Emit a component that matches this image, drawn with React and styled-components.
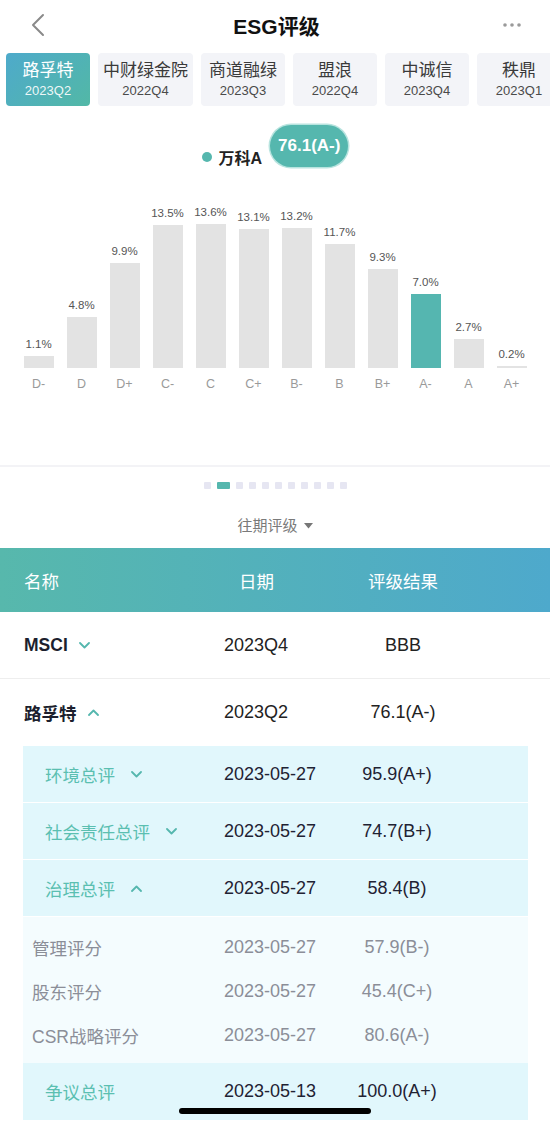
import React from "react";
import styled, { createGlobalStyle } from "styled-components";

const TEAL = "#55b7ae";

const GlobalStyle = createGlobalStyle`
  body {
    margin: 0;
    background: #fff;
    font-family: "Liberation Sans", "Noto Sans CJK SC", sans-serif;
  }
`;

const Page = styled.div`
  width: 550px;
  min-height: 1125px;
  overflow: hidden;
  background: #fff;
`;

const NavBar = styled.div`
  height: 50px;
  display: grid;
  grid-template-columns: 1fr auto 1fr;
  align-items: center;
  padding: 0 28px 0 31px;
`;

const NavTitle = styled.h1`
  margin: 0;
  font-size: 21px;
  font-weight: bold;
  color: #111;
`;

const NavRight = styled.div`
  justify-self: end;
  display: flex;
`;

const TabStrip = styled.div`
  display: flex;
  gap: 8px;
  padding: 0 6px;
  margin-top: 3px;
  overflow: hidden;
`;

const Tab = styled.div`
  flex: 0 0 auto;
  min-width: 84px;
  height: 53px;
  padding: 0 5px;
  box-sizing: border-box;
  border-radius: 4px;
  display: flex;
  flex-direction: column;
  align-items: center;
  justify-content: center;
  gap: 2px;
  background: ${(p) =>
    p.$active ? "linear-gradient(135deg, #4eaacb 0%, #52b8a6 100%)" : "#f3f4f8"};
`;

const TabName = styled.span`
  font-size: 17px;
  line-height: 20px;
  color: ${(p) => (p.$active ? "#fff" : "#3a3a3a")};
`;

const TabYear = styled.span`
  font-size: 13px;
  line-height: 16px;
  color: ${(p) => (p.$active ? "rgba(255,255,255,0.92)" : "#4a4a4a")};
`;

const Legend = styled.div`
  display: flex;
  justify-content: center;
  align-items: flex-end;
  margin-top: 19px;
  height: 42px;
`;

const LegendItem = styled.div`
  display: flex;
  align-items: center;
  height: 20px;
  font-size: 16px;
  font-weight: 600;
  color: #222;
`;

const LegendDot = styled.span`
  width: 10px;
  height: 10px;
  border-radius: 50%;
  background: ${TEAL};
  margin-right: 7px;
`;

const ScoreBadge = styled.div`
  margin-left: 8px;
  height: 42px;
  padding: 0 8px;
  border-radius: 21px;
  background: ${TEAL};
  box-shadow: 0 0 0 1.5px #b8e4df;
  color: #fff;
  font-size: 17px;
  font-weight: bold;
  display: flex;
  align-items: center;
`;

const Chart = styled.div`
  padding: 0 17px;
`;

const Bars = styled.div`
  display: grid;
  grid-template-columns: repeat(12, 1fr);
  height: 201px;
  align-items: end;
`;

const BarCol = styled.div`
  display: flex;
  flex-direction: column;
  align-items: center;
  justify-content: flex-end;
`;

const BarValue = styled.span`
  font-size: 11.5px;
  line-height: 13px;
  color: #555;
  margin-bottom: 5px;
`;

const Bar = styled.div`
  width: 30px;
  background: ${(p) => (p.$active ? "#55b6b0" : "#e3e3e3")};
`;

const Axis = styled.div`
  display: grid;
  grid-template-columns: repeat(12, 1fr);
  margin-top: 8px;
`;

const AxisLabel = styled.span`
  text-align: center;
  font-size: 12.5px;
  line-height: 16px;
  color: #9a9a9a;
`;

const Divider = styled.div`
  margin-top: 73px;
  height: 2px;
  background: #f3f3f6;
`;

const Pager = styled.div`
  display: flex;
  justify-content: center;
  gap: 6px;
  margin-top: 15px;
`;

const PagerDot = styled.span`
  width: ${(p) => (p.$active ? 13 : 7)}px;
  height: 7px;
  border-radius: 1px;
  background: ${(p) => (p.$active ? TEAL : "#e6e6f2")};
`;

const HistoryToggle = styled.div`
  margin-top: 26px;
  display: flex;
  justify-content: center;
  align-items: center;
  gap: 6px;
  font-size: 15px;
  line-height: 22px;
  color: #7a7a7a;
`;

const TableHead = styled.div`
  margin-top: 11px;
  height: 64px;
  display: grid;
  grid-template-columns: 200px 130px 98px;
  align-items: center;
  padding-left: 24px;
  background: linear-gradient(90deg, #57b8ac 0%, #4ea9cc 100%);
  color: #fff;
  font-size: 17.5px;
`;

const HeadCell = styled.span`
  padding-left: ${(p) => p.$pad || 0}px;
  text-align: ${(p) => (p.$center ? "center" : "left")};
`;

const Row = styled.div`
  display: grid;
  grid-template-columns: ${(p) => p.$nameWidth}px 130px ${(p) => p.$resWidth}px;
  align-items: center;
  height: ${(p) => p.$h}px;
  padding-left: ${(p) => p.$pad}px;
  font-size: 18px;
  color: ${(p) => p.$color};
  border-bottom: ${(p) => (p.$line ? `1px solid ${p.$line}` : "none")};
`;

const NameCell = styled.span`
  display: flex;
  align-items: center;
  gap: ${(p) => p.$gap || 11}px;
  font-size: 17.5px;
  color: ${(p) => p.$color || "inherit"};
  font-weight: ${(p) => (p.$strong ? 600 : "normal")};
`;

const ResultCell = styled.span`
  text-align: center;
`;

const SubBlock = styled.div`
  margin: 0 22px 0 23px;
  background: #e1f7fc;
`;

const DetailGroup = styled.div`
  background: #f4fcfe;
  padding: 8px 0 6px;
`;

const HomeIndicator = styled.div`
  position: fixed;
  bottom: 11px;
  left: 50%;
  transform: translateX(-50%);
  width: 192px;
  height: 6px;
  border-radius: 3px;
  background: #000;
`;

function BackIcon() {
  return (
    <svg width="14" height="24" viewBox="0 0 14 24">
      <polyline
        points="12,2 2,12 12,22"
        fill="none"
        stroke="#8a8a8a"
        strokeWidth="2"
        strokeLinecap="round"
        strokeLinejoin="round"
      />
    </svg>
  );
}

function MoreIcon() {
  return (
    <svg width="20" height="6" viewBox="0 0 20 6">
      <circle cx="3" cy="3" r="1.8" fill="#9a9a9a" />
      <circle cx="10" cy="3" r="1.8" fill="#9a9a9a" />
      <circle cx="17" cy="3" r="1.8" fill="#9a9a9a" />
    </svg>
  );
}

function Chevron({ up }) {
  return (
    <svg width="11" height="7" viewBox="0 0 11 7">
      <polyline
        points={up ? "1,6 5.5,1.5 10,6" : "1,1 5.5,5.5 10,1"}
        fill="none"
        stroke={TEAL}
        strokeWidth="1.8"
        strokeLinecap="round"
        strokeLinejoin="round"
      />
    </svg>
  );
}

function Caret() {
  return (
    <svg width="9" height="6" viewBox="0 0 9 6">
      <polygon points="0,0 9,0 4.5,5.5" fill="#777" />
    </svg>
  );
}

const tabs = [
  { name: "路孚特", year: "2023Q2", active: true },
  { name: "中财绿金院", year: "2022Q4" },
  { name: "商道融绿", year: "2023Q3" },
  { name: "盟浪", year: "2022Q4" },
  { name: "中诚信", year: "2023Q4" },
  { name: "秩鼎", year: "2023Q1" },
];

const grades = [
  ["D-", 1.1],
  ["D", 4.8],
  ["D+", 9.9],
  ["C-", 13.5],
  ["C", 13.6],
  ["C+", 13.1],
  ["B-", 13.2],
  ["B", 11.7],
  ["B+", 9.3],
  ["A-", 7.0],
  ["A", 2.7],
  ["A+", 0.2],
];

const subRows = [
  { name: "环境总评", date: "2023-05-27", result: "95.9(A+)" },
  { name: "社会责任总评", date: "2023-05-27", result: "74.7(B+)" },
  { name: "治理总评", date: "2023-05-27", result: "58.4(B)", open: true },
];

const details = [
  { name: "管理评分", date: "2023-05-27", result: "57.9(B-)" },
  { name: "股东评分", date: "2023-05-27", result: "45.4(C+)" },
  { name: "CSR战略评分", date: "2023-05-27", result: "80.6(A-)" },
];

export default function App() {
  return (
    <Page>
      <GlobalStyle />
      <NavBar>
        <BackIcon />
        <NavTitle>ESG评级</NavTitle>
        <NavRight>
          <MoreIcon />
        </NavRight>
      </NavBar>

      <TabStrip>
        {tabs.map((t) => (
          <Tab key={t.name} $active={t.active}>
            <TabName $active={t.active}>{t.name}</TabName>
            <TabYear $active={t.active}>{t.year}</TabYear>
          </Tab>
        ))}
      </TabStrip>

      <Legend>
        <LegendItem>
          <LegendDot />
          万科A
        </LegendItem>
        <ScoreBadge>76.1(A-)</ScoreBadge>
      </Legend>

      <Chart>
        <Bars>
          {grades.map(([g, v]) => (
            <BarCol key={g}>
              <BarValue>{v.toFixed(1)}%</BarValue>
              <Bar $active={g === "A-"} style={{ height: Math.max(2, v * 10.6) }} />
            </BarCol>
          ))}
        </Bars>
        <Axis>
          {grades.map(([g]) => (
            <AxisLabel key={g}>{g}</AxisLabel>
          ))}
        </Axis>
      </Chart>

      <Divider />

      <Pager>
        {Array.from({ length: 11 }).map((_, i) => (
          <PagerDot key={i} $active={i === 1} />
        ))}
      </Pager>

      <HistoryToggle>
        往期评级
        <Caret />
      </HistoryToggle>

      <TableHead>
        <HeadCell>名称</HeadCell>
        <HeadCell $pad={15}>日期</HeadCell>
        <HeadCell $center>评级结果</HeadCell>
      </TableHead>

      <Row $nameWidth={200} $resWidth={98} $h={66} $pad={24} $color="#222" $line="#eeeeee">
        <NameCell $strong $color="#1c1f2e">
          MSCI <Chevron />
        </NameCell>
        <span>2023Q4</span>
        <ResultCell>BBB</ResultCell>
      </Row>
      <Row $nameWidth={200} $resWidth={98} $h={67} $pad={24} $color="#222">
        <NameCell $strong $color="#1c1f2e">
          路孚特 <Chevron up />
        </NameCell>
        <span>2023Q2</span>
        <ResultCell>76.1(A-)</ResultCell>
      </Row>

      <SubBlock>
        {subRows.map((r) => (
          <Row
            key={r.name}
            $nameWidth={179}
            $resWidth={86}
            $h={56}
            $pad={22}
            $color="#1f2233"
            $line="#ffffff"
          >
            <NameCell $color="#5bbfb1" $gap={16}>
              {r.name} <Chevron up={r.open} />
            </NameCell>
            <span>{r.date}</span>
            <ResultCell>{r.result}</ResultCell>
          </Row>
        ))}
        <DetailGroup>
          {details.map((r) => (
            <Row key={r.name} $nameWidth={192} $resWidth={86} $h={44} $pad={9} $color="#8b8e98">
              <NameCell>{r.name}</NameCell>
              <span>{r.date}</span>
              <ResultCell>{r.result}</ResultCell>
            </Row>
          ))}
        </DetailGroup>
        <Row $nameWidth={179} $resWidth={86} $h={57} $pad={22} $color="#1f2233">
          <NameCell $color="#5bbfb1">争议总评</NameCell>
          <span>2023-05-13</span>
          <ResultCell>100.0(A+)</ResultCell>
        </Row>
      </SubBlock>

      <HomeIndicator />
    </Page>
  );
}
